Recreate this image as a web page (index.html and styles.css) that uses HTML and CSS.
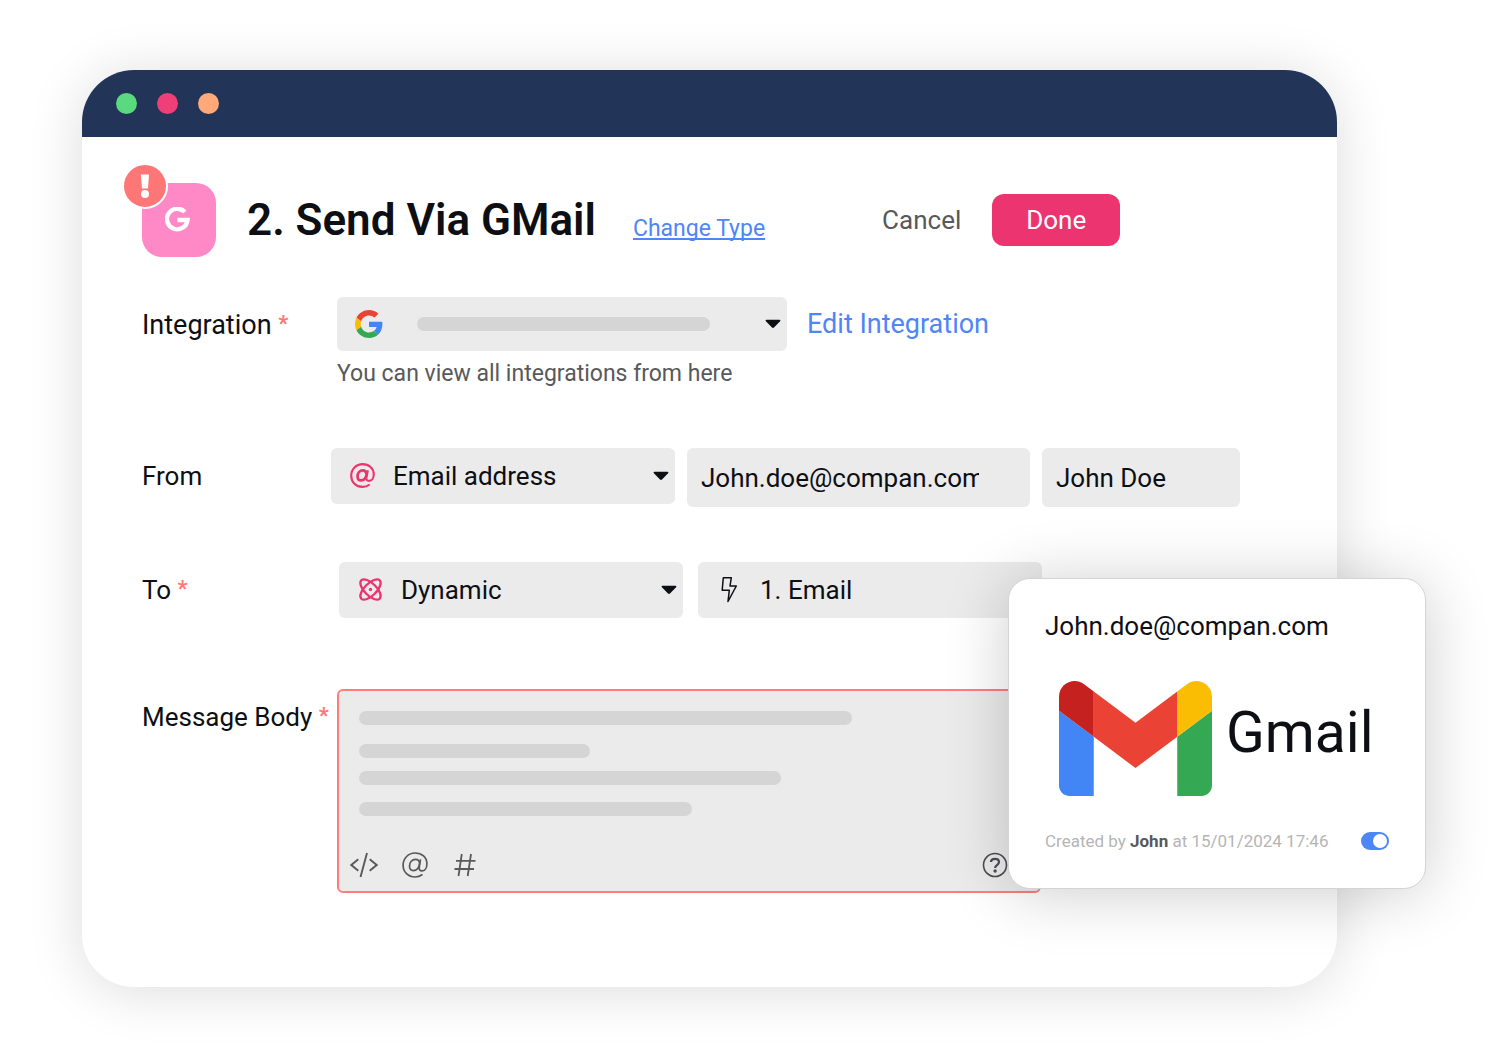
FILE: index.html
```html
<!DOCTYPE html>
<html lang="en">
<head>
<meta charset="utf-8">
<meta name="viewport" content="width=device-width, initial-scale=1">
<title>Send Via GMail</title>
<link rel="stylesheet" href="styles.css">
</head>
<body>
<main class="window">
  <div class="titlebar">
    <span class="dot dot-green"></span>
    <span class="dot dot-pink"></span>
    <span class="dot dot-orange"></span>
  </div>

  <form class="content">
    <header class="header">
      <div class="step-icon">
        <svg width="28" height="26" viewBox="0 0 28 26" fill="none" stroke="#fff" stroke-width="4.400" aria-hidden="true"><path d="M19.800 5A10.300 10.300 0 1 0 22.500 13H12.400"/></svg>
        <span class="alert">
          <svg width="10" height="24" viewBox="0 0 10 24" fill="#fff" aria-hidden="true"><path d="M.8 .5h8.200L8 14.400H2z"/><circle cx="5" cy="20" r="4"/></svg>
        </span>
      </div>
      <h1 class="title">2. Send Via GMail</h1>
      <a class="change" href="#type">Change Type</a>
      <div class="actions">
        <button class="btn-cancel" type="button">Cancel</button>
        <button class="btn-done" type="button">Done</button>
      </div>
    </header>

    <div class="row row-integration">
      <label class="label" for="integration">Integration <span class="req">*</span></label>
      <div class="stack">
        <div class="controls">
          <div class="picker picker-wide">
            <select id="integration"><option></option></select>
            <svg class="picker-icon" width="28" height="28" viewBox="0 0 48 48" aria-hidden="true">
              <path fill="#EA4335" d="M24 9.500c3.540 0 6.710 1.220 9.210 3.600l6.850-6.850C35.900 2.380 30.470 0 24 0 14.620 0 6.510 5.380 2.560 13.220l7.980 6.190C12.430 13.720 17.740 9.500 24 9.500z"/>
              <path fill="#4285F4" d="M46.980 24.550c0-1.570-.15-3.090-.38-4.550H24v9.020h12.940c-.58 2.960-2.260 5.480-4.780 7.180l7.730 6c4.510-4.180 7.090-10.360 7.090-17.650z"/>
              <path fill="#FBBC05" d="M10.530 28.590c-.48-1.450-.76-2.990-.76-4.590s.27-3.140.76-4.590l-7.980-6.190C.92 16.460 0 20.120 0 24s.92 7.540 2.560 10.780l7.970-6.190z"/>
              <path fill="#34A853" d="M24 48c6.480 0 11.930-2.130 15.890-5.810l-7.730-6c-2.150 1.450-4.920 2.300-8.160 2.300-6.260 0-11.570-4.220-13.470-9.910l-7.980 6.190C6.510 42.620 14.620 48 24 48z"/>
            </svg>
            <span class="bar bar-integration"></span>
            <svg class="caret" width="16" height="10" viewBox="0 0 16 10" aria-hidden="true"><path fill="#0e0f14" d="M1.500 .8h13c.9 0 1.200.8.6 1.400L9 8.600c-.6.6-1.400.6-2 0L.9 2.200C.3 1.600.6.8 1.500.8z"/></svg>
          </div>
          <a class="edit" href="#integration">Edit Integration</a>
        </div>
        <p class="hint">You can view all integrations from here</p>
      </div>
    </div>

    <div class="row row-from">
      <label class="label" for="from-kind">From</label>
      <div class="controls">
        <div class="picker">
          <select id="from-kind"><option>Email address</option></select>
          <svg class="picker-icon" width="26" height="26" viewBox="-1 0 27 27" fill="none" stroke="#ec3470" aria-hidden="true"><path stroke-width="2.200" d="M20.500 22.300C18.400 23.900 15.900 24.800 13 24.800 6.200 24.800 1.300 19.800 1.300 13.200 1.300 6.300 6.500 1.200 13.100 1.200c6.700 0 11.600 4.400 11.600 10.500 0 4.400-2.200 6.900-4.900 6.900-2.300 0-3.200-1.500-2.700-3.800L18.600 7.500"/><path stroke-width="2.800" d="M17.300 11.600C17 9 15.500 7.700 13.300 7.700 10.100 7.700 7.900 10.400 7.900 13.900c0 2.600 1.400 4.200 3.600 4.200 2.900 0 5.200-2.500 5.800-6.500z"/></svg>
          <svg class="caret" width="16" height="10" viewBox="0 0 16 10" aria-hidden="true"><path fill="#0e0f14" d="M1.500 .8h13c.9 0 1.200.8.6 1.400L9 8.600c-.6.6-1.400.6-2 0L.9 2.200C.3 1.600.6.8 1.500.8z"/></svg>
        </div>
        <div class="textbox"><input type="text" aria-label="From address" value="John.doe@compan.com"></div>
        <div class="textbox textbox-name"><input type="text" aria-label="From name" value="John Doe"></div>
      </div>
    </div>

    <div class="row row-to">
      <label class="label" for="to-kind">To <span class="req">*</span></label>
      <div class="controls">
        <div class="picker">
          <select id="to-kind"><option>Dynamic</option></select>
          <svg class="picker-icon" width="26" height="26" viewBox="0 0 26 26" fill="none" stroke="#ec3470" stroke-width="2.300" aria-hidden="true"><ellipse cx="13.500" cy="12.500" rx="13" ry="6" transform="rotate(45 13.500 12.500)"/><ellipse cx="13.500" cy="12.500" rx="13" ry="6" transform="rotate(-45 13.500 12.500)"/><circle cx="13.500" cy="12.500" r="1.700" fill="#ec3470" stroke="none"/></svg>
          <svg class="caret" width="16" height="10" viewBox="0 0 16 10" aria-hidden="true"><path fill="#0e0f14" d="M1.500 .8h13c.9 0 1.200.8.6 1.400L9 8.600c-.6.6-1.400.6-2 0L.9 2.200C.3 1.600.6.8 1.500.8z"/></svg>
        </div>
        <div class="picker">
          <input type="text" aria-label="To value" value="1. Email">
          <svg class="picker-icon" width="26" height="26" viewBox="0 0 26 26" fill="none" stroke="#0e0f14" stroke-width="1.500" stroke-linejoin="round" aria-hidden="true"><path d="M7.300.8h8L14 9h6.300L12 24.500l1.300-11.200H6.200z"/></svg>
        </div>
      </div>
    </div>

    <div class="row row-message">
      <label class="label" for="message">Message Body <span class="req">*</span></label>
      <div class="editor">
        <textarea id="message"></textarea>
        <div class="lines">
          <span class="bar" style="width: 493px"></span>
          <span class="bar bar-second" style="width: 231px"></span>
          <span class="bar bar-third" style="width: 422px"></span>
          <span class="bar bar-fourth" style="width: 333px"></span>
        </div>
        <div class="tools">
          <button type="button" aria-label="Insert code"><svg width="28" height="26" viewBox="0 0 28 26" fill="none" stroke="#58595b" stroke-width="1.900"><path d="M8.300 7.300 1.300 13l7 5.800M19.700 7.300l7 5.700-7 5.800M17 1l-6.500 24"/></svg></button>
          <button type="button" aria-label="Insert mention"><svg width="26" height="26" viewBox="0 0 26 26" fill="none" stroke="#58595b" stroke-width="1.700"><path d="M20.500 22.500C18.400 24 15.900 25 13 25 6.200 25 1.100 20 1.100 13.200 1.100 6.300 6.500 1 13.100 1c6.700 0 11.800 4.400 11.800 10.700 0 4.400-2.200 7.200-4.900 7.200-2.300 0-3.200-1.600-2.700-4.100L18.500 7.300"/><path d="M17.600 11.400C17.400 8.800 15.800 7.400 13.500 7.400 10.100 7.400 7.500 10.200 7.500 14c0 2.800 1.500 4.600 3.900 4.600 3.200 0 5.700-3 6.200-7.200z"/></svg></button>
          <button type="button" aria-label="Insert tag"><svg width="24" height="26" viewBox="-2 0 24 26" fill="none" stroke="#58595b" stroke-width="1.800"><path d="M7.800 2 4.500 24M17 2l-3.300 22M2 8.900h19.500M.5 17H20"/></svg></button>
          <button class="help" type="button" aria-label="Help"><svg width="26" height="26" viewBox="0 0 26 26" fill="none" stroke="#4c4d50" stroke-width="1.600"><circle cx="13" cy="13" r="11.500"/><path stroke-width="2.200" d="M8.900 10C9.100 7.900 10.700 6.900 13 6.900c2.400 0 4 1.300 4 3.200 0 3-3.900 2.900-3.900 5.800"/><circle cx="13.100" cy="19" r="1.700" fill="#4c4d50" stroke="none"/></svg></button>
        </div>
      </div>
    </div>
  </form>

  <aside class="card">
    <p class="card-email">John.doe@compan.com</p>
    <div class="brand">
      <svg width="153" height="115" viewBox="52 42 88 66" aria-hidden="true">
        <path fill="#4285f4" d="M58 108h14V74L52 59v43c0 3.320 2.690 6 6 6"/>
        <path fill="#34a853" d="M120 108h14c3.320 0 6-2.690 6-6V59l-20 15"/>
        <path fill="#fbbc04" d="M120 48v26l20-15v-8c0-7.420-8.470-11.650-14.400-7.200"/>
        <path fill="#ea4335" d="M72 74V48l24 18 24-18v26L96 92"/>
        <path fill="#c5221f" d="M52 51v8l20 15V48l-5.600-4.200c-5.940-4.450-14.400-.22-14.400 7.200"/>
      </svg>
      <span class="brand-name">Gmail</span>
    </div>
    <div class="card-foot">
      <label for="enabled">Created by <strong>John</strong> at 15/01/2024 17:46</label>
      <input class="toggle" id="enabled" type="checkbox" role="switch" checked>
    </div>
  </aside>
</main>
</body>
</html>
```
FILE: styles.css
```css
* {
  box-sizing: border-box;
}

body {
  margin: 0;
  padding: 70px 167px 75px 82px;
  background: #fff;
  color: #0e0f14;
  font: 26px/34px Roboto, "Liberation Sans", sans-serif;
}

h1,
p {
  margin: 0;
}

svg {
  display: block;
}

input,
select,
textarea,
button {
  margin: 0;
  padding: 0;
  border: 0;
  background: none;
  color: inherit;
  font: inherit;
}

.window {
  position: relative;
  border-radius: 52px;
  background: #fff;
  box-shadow: 0 4px 56px rgba(0, 0, 0, 0.14);
}

.titlebar {
  display: flex;
  align-items: center;
  gap: 20px;
  height: 67px;
  padding-left: 34px;
  border-radius: 52px 52px 0 0;
  background: #223457;
}

.dot {
  width: 21px;
  height: 21px;
  border-radius: 50%;
}

.dot-green {
  background: #5bd97e;
}

.dot-pink {
  background: #ee3f79;
}

.dot-orange {
  background: #ffa878;
}

.content {
  padding: 46px 60px 94px;
}

.header {
  display: flex;
  align-items: center;
  height: 74px;
}

.step-icon {
  position: relative;
  display: grid;
  place-items: center;
  width: 74px;
  height: 74px;
  border-radius: 20px;
  background: #ff88c6;
}

.alert {
  position: absolute;
  top: -20px;
  left: -20px;
  display: grid;
  place-items: center;
  width: 46px;
  height: 46px;
  border: 2px solid #fff;
  border-radius: 50%;
  background: #ff7676;
}

.title {
  margin-left: 31px;
  font-size: 44px;
  font-weight: 600;
  line-height: 74px;
}

.change {
  margin: 18px 0 0 37px;
  color: #4f86f7;
  font-size: 23px;
  text-decoration-skip-ink: none;
}

.actions {
  display: flex;
  align-items: center;
  gap: 31px;
  margin-left: 117px;
}

.btn-cancel {
  color: #58595b;
}

.btn-done {
  width: 128px;
  height: 52px;
  border-radius: 12px;
  background: #ec3470;
  color: #fff;
}

.row {
  display: flex;
  align-items: flex-start;
}

.row-integration {
  margin-top: 40px;
}

.row-from {
  margin-top: 59px;
}

.row-to {
  margin-top: 55px;
}

.row-message {
  margin-top: 71px;
}

.label {
  flex: none;
  width: 195px;
  line-height: 56px;
  white-space: nowrap;
}

.row-integration .label {
  font-size: 27px;
}

.row-from .label {
  width: 189px;
}

.row-to .label {
  width: 197px;
}

.req {
  color: #ff7676;
  font-size: 22px;
  font-weight: 700;
  line-height: 1;
  vertical-align: 3px;
}

.controls {
  display: flex;
  align-items: flex-start;
  gap: 12px;
}

.row-to .controls {
  gap: 15px;
}

.row-integration .controls {
  align-items: center;
  gap: 20px;
}

.picker {
  display: grid;
  align-items: center;
  width: 344px;
  height: 56px;
  border-radius: 6px;
  background: #ebebeb;
}

.picker-wide {
  width: 450px;
  height: 54px;
}

.picker > * {
  grid-area: 1 / 1;
}

.picker select,
.picker input {
  width: 100%;
  height: 100%;
  padding-left: 62px;
  appearance: none;
}

.picker-icon {
  margin-left: 18px;
  pointer-events: none;
}

.caret {
  justify-self: end;
  margin-right: 6px;
  pointer-events: none;
}

.bar {
  height: 14px;
  border-radius: 7px;
  background: #d5d5d5;
}

.bar-integration {
  width: 293px;
  margin-left: 80px;
  pointer-events: none;
}

.edit {
  color: #4f86f7;
  font-size: 27px;
  text-decoration: none;
}

.hint {
  margin-top: 8px;
  color: #58595b;
  font-size: 23px;
  line-height: 30px;
}

.textbox {
  width: 343px;
  height: 59px;
  padding: 0 51px 0 14px;
  border-radius: 6px;
  background: #ebebeb;
}

.textbox-name {
  width: 198px;
}

.textbox input {
  width: 100%;
  height: 100%;
}

.editor {
  display: grid;
  width: 704px;
  height: 204px;
  border: 2px solid #ff7d7d;
  border-radius: 6px;
  background: #ebebeb;
}

.editor > * {
  grid-area: 1 / 1;
}

.editor textarea {
  width: 100%;
  height: 100%;
  resize: none;
}

.lines {
  display: flex;
  flex-direction: column;
  padding: 20px;
  pointer-events: none;
}

.bar-second {
  margin-top: 19px;
}

.bar-third {
  margin-top: 13px;
}

.bar-fourth {
  margin-top: 17px;
}

.tools {
  display: flex;
  align-self: end;
  gap: 24px;
  padding: 0 31px 13px 11px;
}

.help {
  margin-left: auto;
}

.card {
  position: absolute;
  right: -89px;
  bottom: 98px;
  width: 418px;
  padding: 30px 36px 32px;
  border: 1px solid #d4d4d4;
  border-radius: 22px;
  background: #fff;
  box-shadow: 0 4px 64px rgba(0, 0, 0, 0.2);
}

.brand {
  display: flex;
  align-items: flex-start;
  gap: 14px;
  margin: 38px 0 30px 14px;
}

.brand-name {
  font-size: 57px;
  line-height: 104px;
}

.card-foot {
  display: flex;
  align-items: center;
  justify-content: space-between;
  color: #b5b5b5;
  font-size: 17px;
  line-height: 30px;
}

.card-foot strong {
  color: #58595b;
  font-weight: 700;
}

.toggle {
  display: flex;
  justify-content: flex-end;
  width: 28px;
  height: 18px;
  padding: 2px;
  border-radius: 9px;
  background: #4f86f7;
  appearance: none;
}

.toggle::before {
  width: 14px;
  height: 14px;
  border-radius: 50%;
  background: #fff;
  content: "";
}
```
